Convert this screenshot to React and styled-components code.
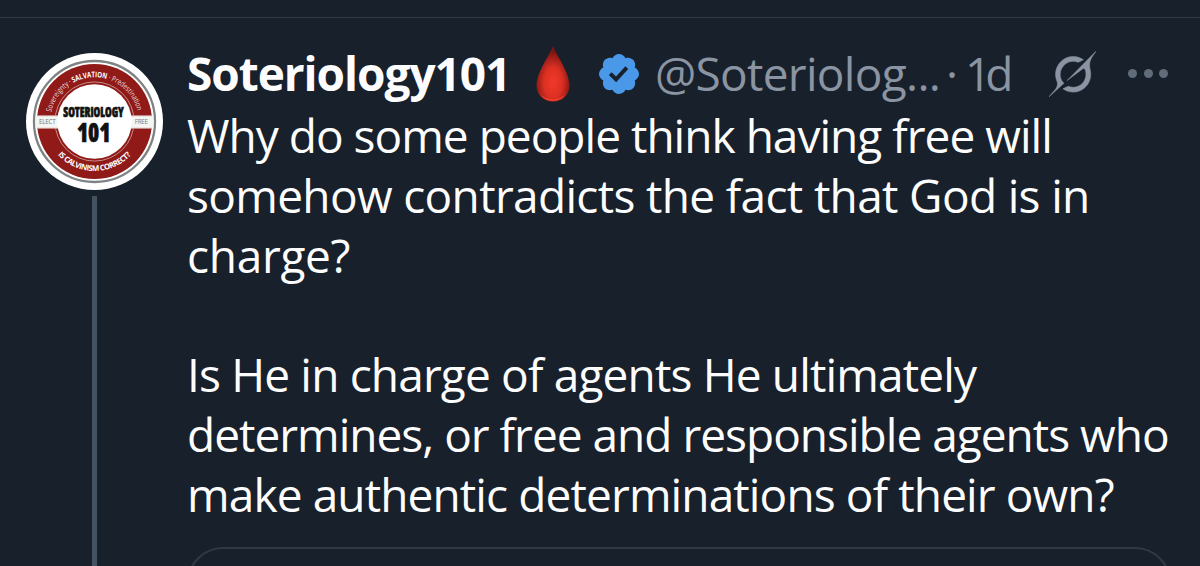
import styled, { createGlobalStyle } from "styled-components";

const theme = {
  background: "#18202b",
  text: "#fdfdfe",
  muted: "#8a94a2",
  dots: "#606c7a",
  thread: "#435261",
  border: "#303945",
  badge: "#4a99e9",
  seal: "#8f1a18",
};

const LINES = [
  { text: "Why do some people think having free will", spacing: -0.98 },
  { text: "somehow contradicts the fact that God is in", spacing: -0.66 },
  { text: "charge?", spacing: -0.3 },
  { text: "", spacing: 0 },
  { text: "Is He in charge of agents He ultimately", spacing: -0.84 },
  { text: "determines, or free and responsible agents who", spacing: -0.99 },
  { text: "make authentic determinations of their own?", spacing: -0.88 },
];

function Avatar() {
  return (
    <AvatarSvg viewBox="0 0 412 412" role="img" aria-label="Soteriology 101">
      <defs>
        <path id="arc-top" d="M 73 206 A 133 133 0 0 1 339 206" />
        <path id="arc-bottom" d="M 57 206 A 149 149 0 0 0 355 206" />
      </defs>
      <circle cx="206" cy="206" r="206" fill="#fff" />
      <circle cx="206" cy="206" r="182" fill="#fff" stroke="#7f8383" strokeWidth="7" />
      <circle cx="206" cy="206" r="173" fill={theme.seal} />
      <circle cx="206" cy="206" r="119" fill={theme.seal} stroke="#e2c5c2" strokeWidth="2" />
      <rect x="33" y="187" width="346" height="41" fill="#c9a3a0" />
      <rect x="29" y="190" width="354" height="35" fill="#f5f5f3" />
      <circle cx="206" cy="206" r="112" fill="#fff" />
      <g fill="#fff" fontFamily="'Open Sans', sans-serif">
        <text fontSize="23.5">
          <textPath href="#arc-top" startOffset="6.7%" textLength="357" lengthAdjust="spacingAndGlyphs">
            <tspan fillOpacity="0.85">Sovereignty · </tspan>
            <tspan fontWeight="700">SALVATION</tspan>
            <tspan fillOpacity="0.85"> · Predestination</tspan>
          </textPath>
        </text>
        <text fontSize="23.5" fontWeight="700" textAnchor="middle">
          <textPath href="#arc-bottom" startOffset="50%" textLength="248">IS CALVINISM CORRECT?</textPath>
        </text>
      </g>
      <g fill="#737b7d" fontFamily="'Open Sans', sans-serif" fontSize="19">
        <text x="39" y="215" textLength="50">ELECT</text>
        <text x="327" y="215" textLength="40">FREE</text>
      </g>
      <SealTitle x="112" y="194" fontSize="44" textLength="182" lengthAdjust="spacingAndGlyphs">
        SOTERIOLOGY
      </SealTitle>
      <SealTitle x="153" y="268" fontSize="80" textLength="101" lengthAdjust="spacingAndGlyphs">
        101
      </SealTitle>
    </AvatarSvg>
  );
}

function BloodDrop() {
  return (
    <DropSvg viewBox="0 0 36 58">
      <defs>
        <radialGradient id="drop" cx="0.5" cy="0.66" r="0.55">
          <stop offset="0" stopColor="#f03a2a" />
          <stop offset="0.5" stopColor="#dc3023" />
          <stop offset="1" stopColor="#7d1613" />
        </radialGradient>
      </defs>
      <path d="M18 1C20 8 34.5 27 34.5 40.5C34.5 50 27.5 56.5 18 56.5S1.5 50 1.5 40.5C1.5 27 16 8 18 1Z" fill="url(#drop)" />
      <path d="M5 48C10 56 26 56 31 48C27 58.500 9 58.500 5 48Z" fill="#ee3d2c" />
    </DropSvg>
  );
}

function VerifiedBadge() {
  return (
    <BadgeSvg viewBox="1.604 1.604 18.792 18.792">
      <path d="M20.396 11c-.018-.646-.215-1.275-.57-1.816-.354-.54-.852-.972-1.438-1.246.223-.607.27-1.264.14-1.897-.131-.634-.437-1.218-.882-1.687-.47-.445-1.053-.75-1.687-.882-.633-.13-1.29-.083-1.897.14-.273-.587-.704-1.086-1.245-1.44S11.647 1.62 11 1.604c-.646.017-1.273.213-1.813.568s-.969.854-1.24 1.44c-.608-.223-1.267-.272-1.902-.14-.635.13-1.22.436-1.69.882-.445.47-.749 1.055-.878 1.688-.13.633-.08 1.29.144 1.896-.587.274-1.087.705-1.443 1.245-.356.54-.555 1.17-.574 1.817.02.647.218 1.276.574 1.817.356.54.856.972 1.443 1.245-.224.606-.274 1.263-.144 1.896.13.634.433 1.218.877 1.688.47.443 1.054.747 1.687.878.633.132 1.29.084 1.897-.136.274.586.705 1.084 1.246 1.439.54.354 1.17.551 1.816.569.647-.016 1.276-.213 1.817-.567s.972-.854 1.245-1.44c.604.239 1.266.296 1.903.164.636-.132 1.22-.447 1.68-.907.46-.46.776-1.044.908-1.681s.075-1.299-.165-1.903c.586-.274 1.084-.705 1.439-1.246.354-.54.551-1.17.569-1.816zM9.662 14.85l-3.429-3.428 1.293-1.302 2.072 2.072 4.4-4.794 1.347 1.246z" />
    </BadgeSvg>
  );
}

function GrokIcon() {
  return (
    <GrokSvg viewBox="0 0 33 32">
      <path d="M12.745 20.54l10.97-8.19c.539-.4 1.307-.244 1.564.38 1.349 3.288.746 7.241-1.938 9.955-2.683 2.714-6.417 3.31-9.83 1.954l-3.728 1.745c5.347 3.697 11.84 2.782 15.898-1.324 3.219-3.255 4.216-7.692 3.284-11.693l.008.009c-1.351-5.878.332-8.227 3.782-13.031L33 0l-4.54 4.59v-.014L12.743 20.544m-2.263 1.987c-3.837-3.707-3.175-9.446.1-12.755 2.42-2.449 6.388-3.448 9.852-1.979l3.72-1.737c-.67-.49-1.53-1.017-2.515-1.387-4.455-1.854-9.789-.931-13.41 2.728-3.483 3.523-4.579 8.94-2.697 13.561 1.405 3.454-.899 5.898-3.22 8.364C1.49 30.2.666 31.074 0 32l10.478-9.466" />
    </GrokSvg>
  );
}

export default function App() {
  return (
    <Page>
      <GlobalStyle />
      <Post>
        <Side>
          <Avatar />
          <ThreadLine />
        </Side>
        <Content>
          <Header>
            <Name>Soteriology101</Name>
            <BloodDrop />
            <VerifiedBadge />
            <Handle>@Soteriolog...</Handle>
            <Separator>·</Separator>
            <Time>1d</Time>
            <GrokIcon />
            <More aria-label="More">
              <i />
              <i />
              <i />
            </More>
          </Header>
          <Body>
            {LINES.map(({ text, spacing }, index) => (
              <Line key={index} $spacing={spacing}>
                {text}
              </Line>
            ))}
          </Body>
          <QuoteCard />
        </Content>
      </Post>
    </Page>
  );
}

const GlobalStyle = createGlobalStyle`
  * {
    box-sizing: border-box;
  }

  body {
    margin: 0;
    background: ${theme.background};
  }
`;

const Page = styled.main`
  height: 566px;
  padding-top: 17px;
  overflow: hidden;
  background: ${theme.background};
  color: ${theme.text};
  font-family: "Open Sans", sans-serif;
  font-size: 46px;
  font-weight: 430;
`;

const Post = styled.article`
  display: grid;
  grid-template-columns: 187px 1fr;
  height: 549px;
  border-top: 1px solid ${theme.border};
`;

const Side = styled.aside`
  display: flex;
  flex-direction: column;
  align-items: center;
  gap: 6px;
  width: 137px;
  margin-left: 26px;
  padding-top: 35px;
`;

const AvatarSvg = styled.svg`
  flex: none;
  width: 137px;
  height: 137px;
`;

const SealTitle = styled.text`
  font-family: "Open Sans", sans-serif;
  font-stretch: 75%;
  font-weight: 800;
  fill: #111;
  stroke: #111;
  stroke-width: 2px;
`;

const ThreadLine = styled.div`
  flex: 1;
  width: 5px;
  background: ${theme.thread};
`;

const Content = styled.div`
  display: flex;
  flex-direction: column;
  width: 984px;
  padding-top: 24px;
`;

const Header = styled.header`
  display: flex;
  align-items: center;
  height: 63px;
  line-height: 60px;
  white-space: pre;
`;

const Name = styled.span`
  width: 348px;
  padding-bottom: 2px;
  font-weight: 700;
  letter-spacing: -1.05px;
`;

const DropSvg = styled.svg`
  width: 36px;
  height: 58px;
`;

const BadgeSvg = styled.svg`
  width: 40px;
  height: 40px;
  margin-left: 28px;
  fill: ${theme.badge};
`;

const Handle = styled.span`
  width: 291px;
  margin-left: 16px;
  padding-bottom: 2px;
  color: ${theme.muted};
  letter-spacing: -0.7px;
`;

const Separator = styled.span`
  width: 19px;
  padding-bottom: 2px;
  color: ${theme.muted};
`;

const Time = styled.span`
  width: 84px;
  padding-bottom: 2px;
  color: ${theme.muted};
  letter-spacing: -6px;
`;

const GrokSvg = styled.svg`
  width: 47px;
  height: 46px;
  fill: ${theme.muted};
  stroke: ${theme.muted};
  stroke-width: 0.4;
`;

const More = styled.div`
  display: flex;
  gap: 6.5px;
  margin-left: 32px;

  i {
    width: 9px;
    height: 9px;
    border-radius: 50%;
    background: ${theme.dots};
  }
`;

const Body = styled.div`
  padding-top: 1px;
  line-height: 59.8px;
  white-space: pre;
`;

const Line = styled.div`
  height: 59.8px;
  letter-spacing: ${({ $spacing }) => $spacing}px;
`;

const QuoteCard = styled.div`
  flex: none;
  height: 80px;
  margin-top: 22px;
  border: 2px solid ${theme.border};
  border-radius: 36px;
`;
